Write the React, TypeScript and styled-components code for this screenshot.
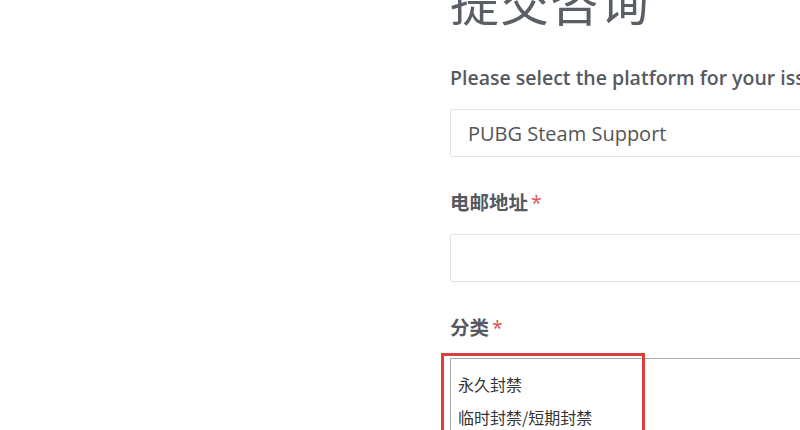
import React from "react";
import styled, { createGlobalStyle } from "styled-components";

const Global = createGlobalStyle`
  html, body { margin: 0; padding: 0; background: #fff; }
  body { font-family: "Open Sans", "Noto Sans CJK SC", sans-serif; overflow: hidden; }
  * { box-sizing: border-box; }
`;

const Page = styled.div`
  width: 800px;
  height: 430px;
  overflow: hidden;
  display: flex;
  align-items: flex-start;
`;

const Form = styled.form`
  margin-left: 450px;
  width: 700px;
  flex-shrink: 0;
  display: flex;
  flex-direction: column;
  & > * { flex-shrink: 0; }
`;

const Title = styled.h1`
  margin: -30px 0 0 0;
  font-family: "Noto Sans CJK SC", sans-serif;
  font-weight: 400;
  font-size: 49px;
  line-height: 60px;
  color: #5a5f66;
  letter-spacing: 1px;
`;

const Label = styled.label<{ $top: number }>`
  display: block;
  margin-top: ${(p) => p.$top}px;
  font-family: "Open Sans", "Noto Sans CJK SC", sans-serif;
  font-weight: 600;
  font-size: 19.5px;
  line-height: 28px;
  color: #555a5f;
  white-space: nowrap;
`;

const Req = styled.span`
  color: #e05252;
  margin-left: 3px;
  font-weight: 400;
`;

const Field = styled.div`
  margin-top: 17px;
  height: 48px;
  border: 1px solid #e4e4e4;
  border-radius: 2px;
  display: flex;
  align-items: center;
  padding-left: 17px;
  font-family: "Open Sans", sans-serif;
  font-size: 20px;
  color: #555;
`;

const ListWrap = styled.div`
  position: relative;
  margin-top: 16px;
`;

const List = styled.ul`
  list-style: none;
  margin: 0;
  padding: 9px 0 0 7px;
  border-top: 1px solid #aaa;
  border-left: 1px solid #aaa;
  height: 140px;
`;

const Item = styled.li`
  font-family: "Noto Sans CJK SC", sans-serif;
  font-size: 16px;
  line-height: 33px;
  color: #333;
`;

const Highlight = styled.div`
  position: absolute;
  left: -9px;
  top: -5px;
  width: 204px;
  height: 140px;
  border: 3px solid #dc3d3d;
  pointer-events: none;
`;

export default function App() {
  return (
    <Page>
      <Global />
      <Form>
        <Title>提交咨询</Title>
        <Label $top={34}>Please select the platform for your issue</Label>
        <Field>PUBG Steam Support</Field>
        <Label $top={32}>
          电邮地址<Req>*</Req>
        </Label>
        <Field />
        <Label $top={32}>
          分类<Req>*</Req>
        </Label>
        <ListWrap>
          <List>
            <Item>永久封禁</Item>
            <Item>临时封禁/短期封禁</Item>
          </List>
          <Highlight />
        </ListWrap>
      </Form>
    </Page>
  );
}
